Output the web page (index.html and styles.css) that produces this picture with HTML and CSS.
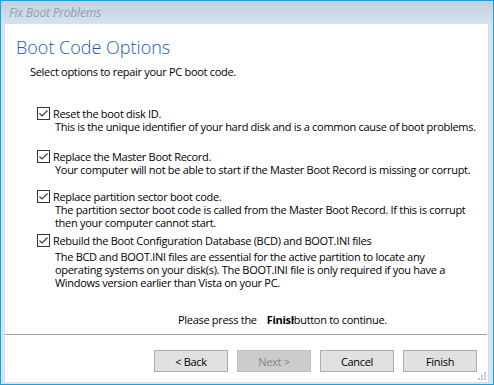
FILE: index.html
```html
<!DOCTYPE html>
<html lang="en">
<head>
	<meta charset="UTF-8">
	<title>Fix Boot Problems</title>
	<link rel="stylesheet" href="styles.css">
</head>
<body>
<div class="window">
	<div class="titlebar">Fix Boot Problems</div>
	<div class="client">
		<div class="page">
			<h1 class="page-title">Boot Code Options</h1>
			<p class="intro">Select options to repair your PC boot code.</p>
			<ul class="options">
				<li class="option">
					<label class="check-row"><span class="box"><svg width="11" height="11" viewBox="0 0 11 11"><path d="M1.5 5.5 L4 8 L9.5 2.5" fill="none" stroke="#333" stroke-width="1.1"/></svg></span>Reset the boot disk ID.</label>
					<p class="desc">This is the unique identifier of your hard disk and is a common cause of boot problems.</p>
				</li>
				<li class="option option-2">
					<label class="check-row"><span class="box"><svg width="11" height="11" viewBox="0 0 11 11"><path d="M1.5 5.5 L4 8 L9.5 2.5" fill="none" stroke="#333" stroke-width="1.1"/></svg></span>Replace the Master Boot Record.</label>
					<p class="desc">Your computer will not be able to start if the Master Boot Record is missing or corrupt.</p>
				</li>
				<li class="option option-3">
					<label class="check-row"><span class="box"><svg width="11" height="11" viewBox="0 0 11 11"><path d="M1.5 5.5 L4 8 L9.5 2.5" fill="none" stroke="#333" stroke-width="1.1"/></svg></span>Replace partition sector boot code.</label>
					<p class="desc">The partition sector boot code is called from the Master Boot Record. If this is corrupt<br>then your computer cannot start.</p>
				</li>
				<li class="option option-4">
					<label class="check-row"><span class="box"><svg width="11" height="11" viewBox="0 0 11 11"><path d="M1.5 5.5 L4 8 L9.5 2.5" fill="none" stroke="#333" stroke-width="1.1"/></svg></span>Rebuild the Boot Configuration Database (BCD) and BOOT.INI files</label>
					<p class="desc desc-spaced">The BCD and BOOT.INI files are essential for the active partition to locate any<br>operating systems on your disk(s). The BOOT.INI file is only required if you have a<br>Windows version earlier than Vista on your PC.</p>
				</li>
			</ul>
			<p class="hint">Please press the<b class="btn-name">Finish</b>button to continue.</p>
		</div>
		<div class="footer">
			<button class="btn">&lt; Back</button>
			<button class="btn" disabled>Next &gt;</button>
			<button class="btn">Cancel</button>
			<button class="btn">Finish</button>
		</div>
		<svg class="grip" width="8" height="8" viewBox="0 0 8 8">
			<rect x="6" y="0" width="2" height="2" fill="#c4c4c4"/>
			<rect x="3" y="3" width="2" height="2" fill="#c4c4c4"/>
			<rect x="6" y="3" width="2" height="2" fill="#c4c4c4"/>
			<rect x="0" y="6" width="2" height="2" fill="#c4c4c4"/>
			<rect x="3" y="6" width="2" height="2" fill="#c4c4c4"/>
			<rect x="6" y="6" width="2" height="2" fill="#c4c4c4"/>
		</svg>
	</div>
</div>
</body>
</html>
```
FILE: styles.css
```css
body,ul,li,p,h1{
	margin: 0;
	padding: 0;
	list-style: none;
}
body{
	font-family: "Open Sans", "Noto Sans", sans-serif;
	font-size: 11px;
	letter-spacing: -0.3px;
	color: #000;
}
.window{
	width: 494px;
	height: 385px;
	box-sizing: border-box;
	border: 1px solid #1ba1e2;
	background: #d6e4f1;
	display: flex;
	flex-direction: column;
}
.titlebar{
	height: 23px;
	line-height: 23px;
	padding-left: 8px;
	background: linear-gradient(#c3d1dd, #d5e3f0);
	font-style: italic;
	font-size: 12px;
	letter-spacing: -0.2px;
	color: #8d9eae;
}
.client{
	flex: 1;
	min-height: 0;
	margin: 0 5px 2px 4px;
	background: #fff;
	display: flex;
	flex-direction: column;
	position: relative;
}
.page{
	flex: 1;
	white-space: nowrap;
}
.page-title{
	margin: 11px 0 0 11px;
	font-size: 18px;
	font-weight: 300;
	line-height: 24px;
	letter-spacing: 0;
	color: #1d5bab;
}
.intro{
	margin: 6px 0 0 25px;
	line-height: 14px;
}
.options{
	margin: 28px 0 0 32px;
}
.option-2{
	margin-top: 17px;
}
.option-3{
	margin-top: 14px;
}
.option-4{
	margin-top: 5px;
}
.check-row{
	display: flex;
	align-items: center;
	height: 13px;
	gap: 3px;
}
.box{
	width: 11px;
	height: 11px;
	border: 1px solid #333;
	background: #fff;
	display: flex;
}
.desc{
	padding-left: 18px;
	line-height: 13px;
}
.desc-spaced{
	margin-top: 3px;
}
.hint{
	margin: 24px 0 0 173px;
	line-height: 14px;
}
.btn-name{
	display: inline-block;
	vertical-align: top;
	width: 27px;
	margin-left: 10px;
	overflow: hidden;
	font-weight: bold;
}
.footer{
	border-top: 1px solid #a0a0a0;
	margin-right: 1px;
	padding: 15px 10px 10px 0;
	display: flex;
	justify-content: flex-end;
	gap: 9px;
}
.btn{
	width: 74px;
	height: 22px;
	padding: 0;
	border: 1px solid #adadad;
	background: #e1e1e1;
	font-family: inherit;
	font-size: 11px;
	letter-spacing: -0.3px;
	color: #000;
}
.btn:disabled{
	border-color: #bfbfbf;
	background: #cccccc;
	color: #838383;
}
.grip{
	position: absolute;
	right: 2px;
	bottom: 2px;
}
```
